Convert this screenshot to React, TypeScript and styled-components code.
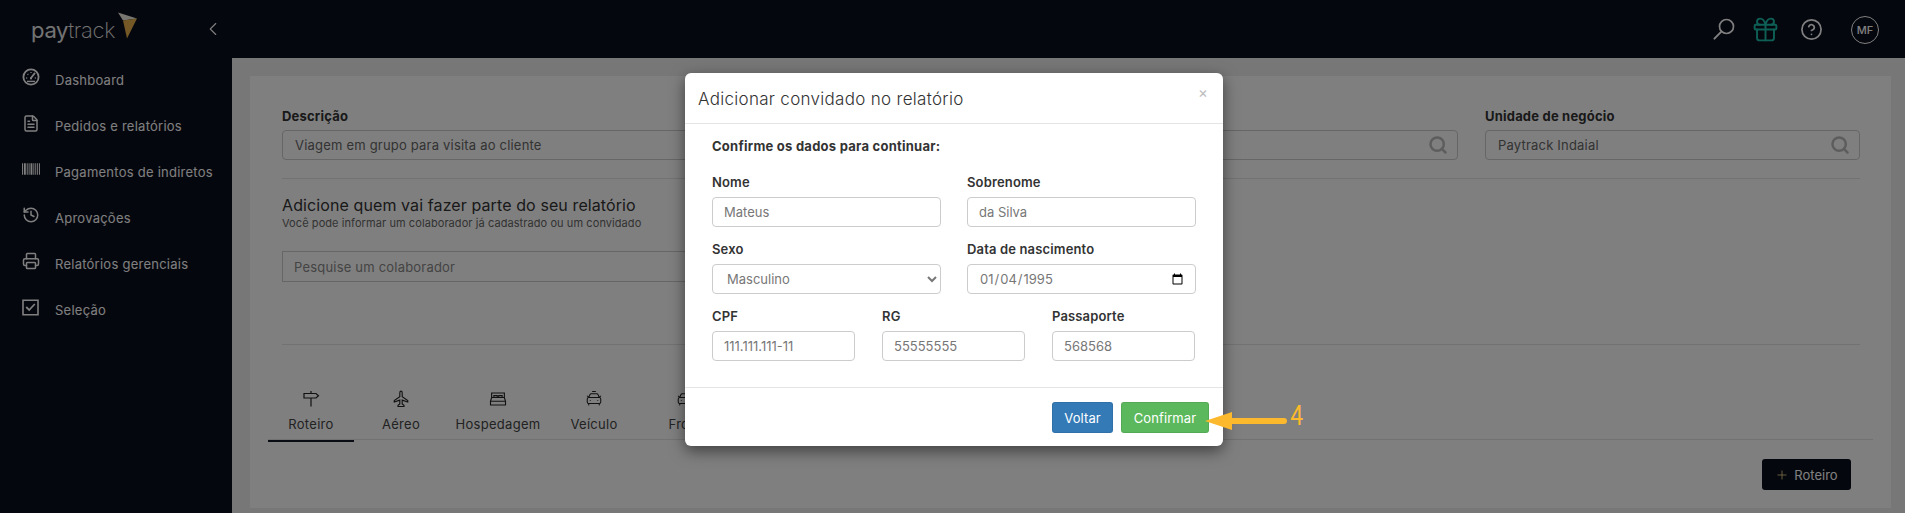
import styled, { createGlobalStyle } from 'styled-components';
import {
  CarFront,
  CarTaxiFront,
  ChevronLeft,
  CircleHelp,
  FileText,
  Gift,
  History,
  Plus,
  Printer,
  Search,
} from 'lucide-react';

const GlobalStyle = createGlobalStyle`
  html, body {
    margin: 0;
    padding: 0;
    height: 513px;
    overflow: hidden;
    background: #eeeeee;
    font-family: Inter, "Noto Sans", "Liberation Sans", sans-serif;
  }
  * { box-sizing: border-box; }
`;

const Shell = styled.div`
  position: relative;
  height: 513px;
  display: flex;
  flex-direction: column;
  overflow: hidden;
`;

const TopBar = styled.header`
  height: 58px;
  flex: none;
  background: #0a0e1c;
  display: flex;
  align-items: center;
  color: #fff;
`;

const Logo = styled.div`
  width: 202px;
  padding: 1px 0 0 31px;
  display: flex;
  align-items: center;
  font-size: 22px;
  letter-spacing: -0.3px;
  line-height: 1;
  color: #e6e6e6;

  svg {
    margin: -8px 0 0 3px;
  }
`;

const LogoThin = styled.span`
  font-weight: 200;
`;

const Collapse = styled.div`
  display: flex;
  margin-top: -1px;
`;

const TopActions = styled.div`
  margin-left: auto;
  display: flex;
  align-items: center;
  padding-right: 26px;
`;

const TopIcon = styled.div<{ $gap: number }>`
  display: flex;
  margin-right: ${(p) => p.$gap}px;
`;

const Avatar = styled.div`
  width: 28px;
  height: 28px;
  border: 1px solid #fff;
  border-radius: 50%;
  font-size: 11px;
  font-weight: 500;
  display: flex;
  align-items: center;
  justify-content: center;
  margin-top: 2px;
`;

const Body = styled.div`
  flex: 1;
  display: flex;
  min-height: 0;
`;

const Sidebar = styled.nav`
  width: 232px;
  flex: none;
  background: #0a0e1c;
`;

const NavItem = styled.div`
  height: 46px;
  display: flex;
  align-items: center;
  padding: 0 0 2px 22px;
  color: #fff;
  font-size: 13px;
  letter-spacing: 0.25px;
`;

const NavIcon = styled.span`
  width: 18px;
  flex: none;
  display: flex;
  margin-top: -6px;
`;

const NavLabel = styled.span`
  margin-left: 15px;
`;

const Content = styled.main`
  flex: 1;
  padding: 18px 14px 5px 18px;
  min-width: 0;
`;

const Card = styled.section`
  height: 100%;
  background: #fff;
  padding: 32px 31px 0 32px;
  display: flex;
  flex-direction: column;
`;

const FilterRow = styled.div`
  display: grid;
  grid-template-columns: 578px 571px 375px;
  column-gap: 27px;
  padding-bottom: 18px;
  border-bottom: 1px solid #e4e4e4;
`;

const Field = styled.div`
  display: flex;
  flex-direction: column;
`;

const FieldLabel = styled.label`
  font-size: 13px;
  font-weight: 700;
  letter-spacing: 0.2px;
  color: #333;
  line-height: 16px;
  margin-bottom: 6px;
`;

const SearchBox = styled.div`
  height: 30px;
  border: 1px solid #ccc;
  border-radius: 4px;
  display: flex;
  align-items: center;
  justify-content: space-between;
  padding: 0 9px 0 12px;
  font-size: 13px;
  letter-spacing: 0.2px;
  color: #666;
`;

const GuestSection = styled.div`
  height: 166px;
  flex: none;
  padding-top: 16px;
  border-bottom: 1px solid #e4e4e4;
`;

const GuestTitle = styled.h2`
  margin: 0;
  font-size: 16px;
  font-weight: 400;
  letter-spacing: 0.1px;
  line-height: 20px;
  color: #333;
`;

const GuestHint = styled.p`
  margin: 1px 0 0;
  font-size: 11px;
  line-height: 14px;
  letter-spacing: 0.08px;
  color: #666;
`;

const GuestInput = styled.div`
  width: 570px;
  height: 31px;
  margin-top: 21px;
  border: 1px solid #ccc;
  font-size: 13px;
  letter-spacing: 0.2px;
  color: #888;
  display: flex;
  align-items: center;
  padding-left: 11px;
`;

const TabRow = styled.div`
  margin: 30px -13px 0 -14px;
  height: 65px;
  flex: none;
  display: flex;
  border-bottom: 1px solid #e4e4e4;
`;

const Tab = styled.div<{ $active?: boolean; $width: number }>`
  width: ${(p) => p.$width}px;
  height: 67px;
  padding-top: 15px;
  display: flex;
  flex-direction: column;
  align-items: center;
  color: #444;
  font-size: 13px;
  letter-spacing: 0.3px;
  border-bottom: 2px solid ${(p) => (p.$active ? '#141829' : 'transparent')};
  gap: 8px;
`;

const TabBar = styled.div`
  display: flex;
  justify-content: flex-end;
  padding: 19px 9px 0 0;
`;

const DarkButton = styled.button`
  width: 89px;
  height: 31px;
  background: #0a0e1c;
  border: 0;
  border-radius: 3px;
  color: #fff;
  font: inherit;
  font-size: 13px;
  display: flex;
  align-items: center;
  justify-content: center;
  gap: 5px;
`;

const Overlay = styled.div`
  position: absolute;
  inset: 0;
  background: rgba(0, 0, 0, 0.5);
  padding: 73px 0 0 685px;
`;

const Modal = styled.div`
  position: relative;
  width: 538px;
  height: 373px;
  background: #fff;
  border-radius: 6px;
  box-shadow: 0 5px 15px rgba(0, 0, 0, 0.5);
  display: flex;
  flex-direction: column;
`;

const ModalHeader = styled.div`
  height: 51px;
  flex: none;
  display: flex;
  align-items: flex-start;
  justify-content: space-between;
  padding: 15px 15px 0 13px;
  border-bottom: 1px solid #e5e5e5;
`;

const ModalTitle = styled.h4`
  margin: 1px 0 0;
  font-size: 17px;
  font-weight: 300;
  line-height: 20px;
  letter-spacing: 0.3px;
  color: #333;
`;

const CloseMark = styled.span`
  font-size: 15px;
  line-height: 10px;
  color: #bdbdbd;
`;

const ModalBody = styled.div`
  flex: 1;
  padding: 14px 27px 0 27px;
`;

const Lead = styled.div`
  font-size: 13px;
  font-weight: 700;
  line-height: 16px;
  color: #333;
  letter-spacing: 0.25px;
  margin-bottom: 20px;
`;

const FormRow = styled.div<{ $cols: number }>`
  display: grid;
  grid-template-columns: repeat(${(p) => p.$cols}, ${(p) => (p.$cols === 2 ? '229px' : '143px')});
  column-gap: ${(p) => (p.$cols === 2 ? 26 : 27)}px;
  margin-bottom: 14px;
`;

const FormLabel = styled.label`
  display: block;
  font-size: 13px;
  font-weight: 600;
  line-height: 16px;
  letter-spacing: 0.15px;
  color: #333;
  margin-bottom: 7px;
`;

const controlCss = `
  width: 100%;
  height: 30px;
  border: 1px solid #ccc;
  border-radius: 4px;
  background: #fff;
  font-family: Inter, "Noto Sans", "Liberation Sans", sans-serif;
  font-size: 13px;
  color: #777;
  outline: none;
`;

const TextInput = styled.input`
  ${controlCss}
  padding: 0 11px;
`;

const SelectInput = styled.select`
  ${controlCss}
  padding: 0 10px;
`;

const DateInput = styled.input`
  ${controlCss}
  padding: 0 9px 0 11px;
`;

const ModalFooter = styled.div`
  height: 59px;
  flex: none;
  display: flex;
  justify-content: flex-end;
  gap: 8px;
  padding: 14px 14px 0 0;
  border-top: 1px solid #e5e5e5;
`;

const FooterButton = styled.button<{ $color: string; $width: number }>`
  width: ${(p) => p.$width}px;
  height: 31px;
  background: ${(p) => p.$color};
  border: 1px solid rgba(0, 0, 0, 0.08);
  border-radius: 3px;
  color: #fff;
  font-family: inherit;
  font-size: 13px;
  letter-spacing: 0.1px;
  padding: 0;
`;

const Callout = styled.div`
  position: absolute;
  left: 520px;
  top: 337px;
  display: flex;
  align-items: flex-start;
`;

const CalloutNumber = styled.span`
  display: inline-block;
  font-family: Roboto, sans-serif;
  font-size: 27px;
  line-height: 28px;
  color: #fdb92e;
  margin: -8px 0 0 2px;
  transform: scaleX(0.85);
`;

const GaugeIcon = () => (
  <svg width="18" height="18" viewBox="0 0 18 18" fill="none" stroke="#fff" strokeWidth="1.8">
    <circle cx="9" cy="9" r="7.6" />
    <path d="M9 10l3.6-4.6" strokeLinecap="round" />
    <circle cx="9" cy="10.4" r="1.1" fill="#fff" stroke="none" />
    <path d="M4.2 10h1M5.6 6l.7.7M9 4v1M13.8 10h-1" strokeWidth="1.3" />
    <path d="M5 13.4h8" strokeWidth="1.4" />
  </svg>
);

const BarcodeIcon = () => (
  <svg width="19" height="12" viewBox="0 0 19 12" fill="#fff">
    <path d="M0 0h1v12H0zM2 0h2v12H2zM5 0h1v12H5zM7 0h1v12H7zM9 0h2v12H9zM12 0h1v12h-1zM14 0h1v12h-1zM16 0h1v12h-1zM18 0h1v12h-1z" />
  </svg>
);

const CheckIcon = () => (
  <svg width="17" height="17" viewBox="0 0 17 17" fill="none" stroke="#fff">
    <path d="M1 1.2h15v14.6H1z" strokeWidth="1.6" />
    <path d="M4.2 8l3 3 5.6-6" strokeWidth="1.8" />
  </svg>
);

const SearchGlass = () => (
  <svg width="24" height="24" viewBox="0 0 24 24" fill="none" stroke="#fff" strokeWidth="1.7">
    <circle cx="14.5" cy="9.5" r="7" />
    <path d="M9.6 14.4L2.4 21.6" strokeWidth="2" strokeLinecap="round" />
  </svg>
);

const SignIcon = () => (
  <svg width="18" height="18" viewBox="0 0 18 18" fill="none" stroke="#222" strokeWidth="1.2">
    <path d="M2 3.5h12l2.5 2.2L14 8H2zM9 1v2.5M9 8v8.5" />
  </svg>
);

const PlaneIcon = () => (
  <svg width="18" height="18" viewBox="0 0 24 24" fill="none" stroke="#222" strokeWidth="1.5">
    <path d="M12 1.5c1 0 1.6 1 1.6 2.5v5l7.4 5v2l-7.4-2.5v5l2.4 2V22H8v-1.5l2.4-2v-5L3 16v-2l7.4-5V4c0-1.500.6-2.500 1.600-2.500z" />
  </svg>
);

const BedIcon = () => (
  <svg width="18" height="18" viewBox="0 0 24 24" fill="none" stroke="#222" strokeWidth="1.5">
    <path d="M3.500 10V4h17v6M2 15l1.500-5h17L22 15v5H2zM2 15h20M6.500 10V7.500h4.500V10M13 10V7.500h4.500V10" />
  </svg>
);

const navItems = [
  { label: 'Dashboard', icon: <GaugeIcon /> },
  { label: 'Pedidos e relatórios', icon: <FileText size={19} strokeWidth={2} /> },
  { label: 'Pagamentos de indiretos', icon: <BarcodeIcon /> },
  { label: 'Aprovações', icon: <History size={18} strokeWidth={2} /> },
  { label: 'Relatórios gerenciais', icon: <Printer size={18} strokeWidth={2} /> },
  { label: 'Seleção', icon: <CheckIcon /> },
];

const tabs = [
  { label: 'Roteiro', width: 86, icon: <SignIcon /> },
  { label: 'Aéreo', width: 94, icon: <PlaneIcon /> },
  { label: 'Hospedagem', width: 100, icon: <BedIcon /> },
  { label: 'Veículo', width: 92, icon: <CarTaxiFront size={18} strokeWidth={1.4} color="#222" /> },
  { label: 'Frota', width: 90, icon: <CarFront size={18} strokeWidth={1.4} color="#222" /> },
];

export default function App() {
  return (
    <Shell>
      <GlobalStyle />
      <TopBar>
        <Logo>
          <span>pay</span>
          <LogoThin>track</LogoThin>
          <svg width="20" height="29" viewBox="0 0 20 28">
            <path d="M0 1l19 6-14 2z" fill="#f0ece2" />
            <path d="M5 9l14-2-10 20z" fill="#e8b04a" />
          </svg>
        </Logo>
        <Collapse>
          <ChevronLeft size={22} strokeWidth={1.2} color="#fff" />
        </Collapse>
        <TopActions>
          <TopIcon $gap={15}>
            <SearchGlass />
          </TopIcon>
          <TopIcon $gap={20}>
            <Gift size={29} strokeWidth={1.6} color="#1cbeaa" />
          </TopIcon>
          <TopIcon $gap={28}>
            <CircleHelp size={23} strokeWidth={1.8} color="#fff" />
          </TopIcon>
          <Avatar>MF</Avatar>
        </TopActions>
      </TopBar>
      <Body>
        <Sidebar>
          {navItems.map((item) => (
            <NavItem key={item.label}>
              <NavIcon>{item.icon}</NavIcon>
              <NavLabel>{item.label}</NavLabel>
            </NavItem>
          ))}
        </Sidebar>
        <Content>
          <Card>
            <FilterRow>
              <Field>
                <FieldLabel>Descrição</FieldLabel>
                <SearchBox>Viagem em grupo para visita ao cliente</SearchBox>
              </Field>
              <Field>
                <FieldLabel>&nbsp;</FieldLabel>
                <SearchBox>
                  <span />
                  <Search size={20} strokeWidth={3} color="#bbb" />
                </SearchBox>
              </Field>
              <Field>
                <FieldLabel>Unidade de negócio</FieldLabel>
                <SearchBox>
                  Paytrack Indaial
                  <Search size={20} strokeWidth={3} color="#bbb" />
                </SearchBox>
              </Field>
            </FilterRow>
            <GuestSection>
              <GuestTitle>Adicione quem vai fazer parte do seu relatório</GuestTitle>
              <GuestHint>Você pode informar um colaborador já cadastrado ou um convidado</GuestHint>
              <GuestInput>Pesquise um colaborador</GuestInput>
            </GuestSection>
            <TabRow>
              {tabs.map((tab, i) => (
                <Tab key={tab.label} $active={i === 0} $width={tab.width}>
                  {tab.icon}
                  {tab.label}
                </Tab>
              ))}
            </TabRow>
            <TabBar>
              <DarkButton>
                <Plus size={14} strokeWidth={1.5} color="#e8d48a" />
                Roteiro
              </DarkButton>
            </TabBar>
          </Card>
        </Content>
      </Body>
      <Overlay>
        <Modal>
          <ModalHeader>
            <ModalTitle>Adicionar convidado no relatório</ModalTitle>
            <CloseMark>×</CloseMark>
          </ModalHeader>
          <ModalBody>
            <Lead>Confirme os dados para continuar:</Lead>
            <FormRow $cols={2}>
              <div>
                <FormLabel>Nome</FormLabel>
                <TextInput defaultValue="Mateus" />
              </div>
              <div>
                <FormLabel>Sobrenome</FormLabel>
                <TextInput defaultValue="da Silva" />
              </div>
            </FormRow>
            <FormRow $cols={2}>
              <div>
                <FormLabel>Sexo</FormLabel>
                <SelectInput defaultValue="m">
                  <option value="m">Masculino</option>
                  <option value="f">Feminino</option>
                </SelectInput>
              </div>
              <div>
                <FormLabel>Data de nascimento</FormLabel>
                <DateInput type="date" defaultValue="1995-01-04" />
              </div>
            </FormRow>
            <FormRow $cols={3}>
              <div>
                <FormLabel>CPF</FormLabel>
                <TextInput defaultValue="111.111.111-11" />
              </div>
              <div>
                <FormLabel>RG</FormLabel>
                <TextInput defaultValue="55555555" />
              </div>
              <div>
                <FormLabel>Passaporte</FormLabel>
                <TextInput defaultValue="568568" />
              </div>
            </FormRow>
          </ModalBody>
          <ModalFooter>
            <FooterButton $color="#337ab7" $width={61}>Voltar</FooterButton>
            <FooterButton $color="#5cb85c" $width={88}>Confirmar</FooterButton>
          </ModalFooter>
          <Callout>
            <svg width="82" height="20" viewBox="0 0 82 20">
              <path d="M0 11L27 2v6h52a3 3 0 0 1 0 6H27v6z" fill="#fdb92e" />
            </svg>
            <CalloutNumber>4</CalloutNumber>
          </Callout>
        </Modal>
      </Overlay>
    </Shell>
  );
}
